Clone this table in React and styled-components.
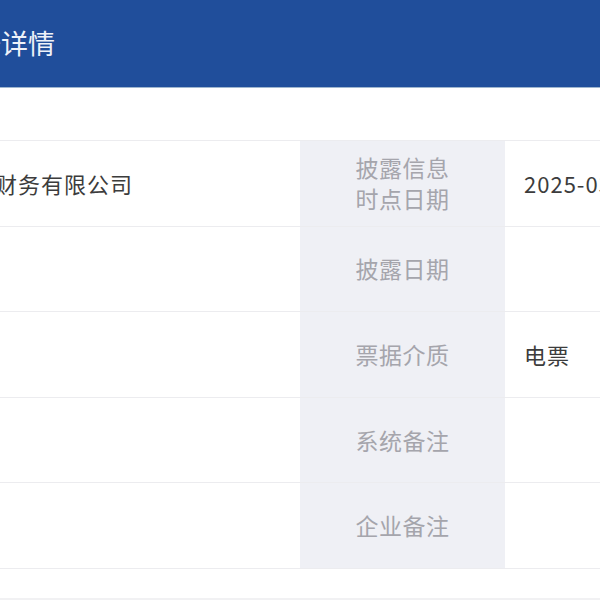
import styled, { createGlobalStyle } from 'styled-components';

const GlobalStyle = createGlobalStyle`
  html, body {
    margin: 0;
    padding: 0;
    background: #ffffff;
  }
  body {
    font-family: "Noto Sans CJK SC", "Noto Sans", sans-serif;
  }
`
const Page = styled.div`
  width: 600px;
  height: 600px;
  overflow: hidden;
  display: flex;
  flex-direction: column;
  background: #ffffff;
`
const Header = styled.div`
  height: 88px;
  flex-shrink: 0;
  background-color: #204e9b;
  display: flex;
  align-items: center;
  border-bottom: 1px solid #9fb6cf;
  box-sizing: border-box;
`
const Title = styled.h1`
  margin: 0 0 2px -53px;
  font-size: 27px;
  font-weight: 400;
  color: #eef2f9;
  white-space: nowrap;
`
const Gap = styled.div`
  height: ${(props) => props.h}px;
  flex-shrink: 0;
`
const Table = styled.div`
  margin-left: -325px;
  width: calc(100% + 325px);
  border-top: 1px solid #ececef;
  display: flex;
  flex-direction: column;
  flex-shrink: 0;
`
const Row = styled.div`
  display: grid;
  grid-template-columns: 205px 420px 205px 1fr;
  height: 85.6px;
  box-sizing: border-box;
  border-bottom: 1px solid #ececef;
`
const Label = styled.div`
  background-color: #eff0f5;
  color: #a5a5ac;
  font-size: 23px;
  line-height: 31px;
  display: flex;
  align-items: center;
  justify-content: center;
  text-align: center;
  letter-spacing: 0.5px;
`
const LabelText = styled.span`
  max-width: 100px;
`
const Value = styled.div`
  color: #3c3c3c;
  font-size: 22px;
  display: flex;
  align-items: center;
  padding-left: ${(props) => props.pad}px;
  white-space: nowrap;
  letter-spacing: 1px;
`
const Footer = styled.div`
  flex: 1;
  background-color: #f1f1f3;
`

const rows = [
  { l1: '承兑人', v1: '中国华能财务有限公司', l2: '披露信息时点日期', v2: '2025-03-31' },
  { l1: '承兑人账号', v1: '', l2: '披露日期', v2: '' },
  { l1: '票据类型', v1: '', l2: '票据介质', v2: '电票' },
  { l1: '票面金额', v1: '', l2: '系统备注', v2: '' },
  { l1: '到期日', v1: '', l2: '企业备注', v2: '' },
]

function App() {
  return (
    <Page>
      <GlobalStyle />
      <Header>
        <Title>票据详情</Title>
      </Header>
      <Gap h={52} />
      <Table>
        {rows.map((row) => (
          <Row key={row.l2}>
            <Label><LabelText>{row.l1}</LabelText></Label>
            <Value pad={23}>{row.v1}</Value>
            <Label><LabelText>{row.l2}</LabelText></Label>
            <Value pad={19}>{row.v2}</Value>
          </Row>
        ))}
      </Table>
      <Gap h={29} />
      <Footer />
    </Page>
  )
}

export default App
